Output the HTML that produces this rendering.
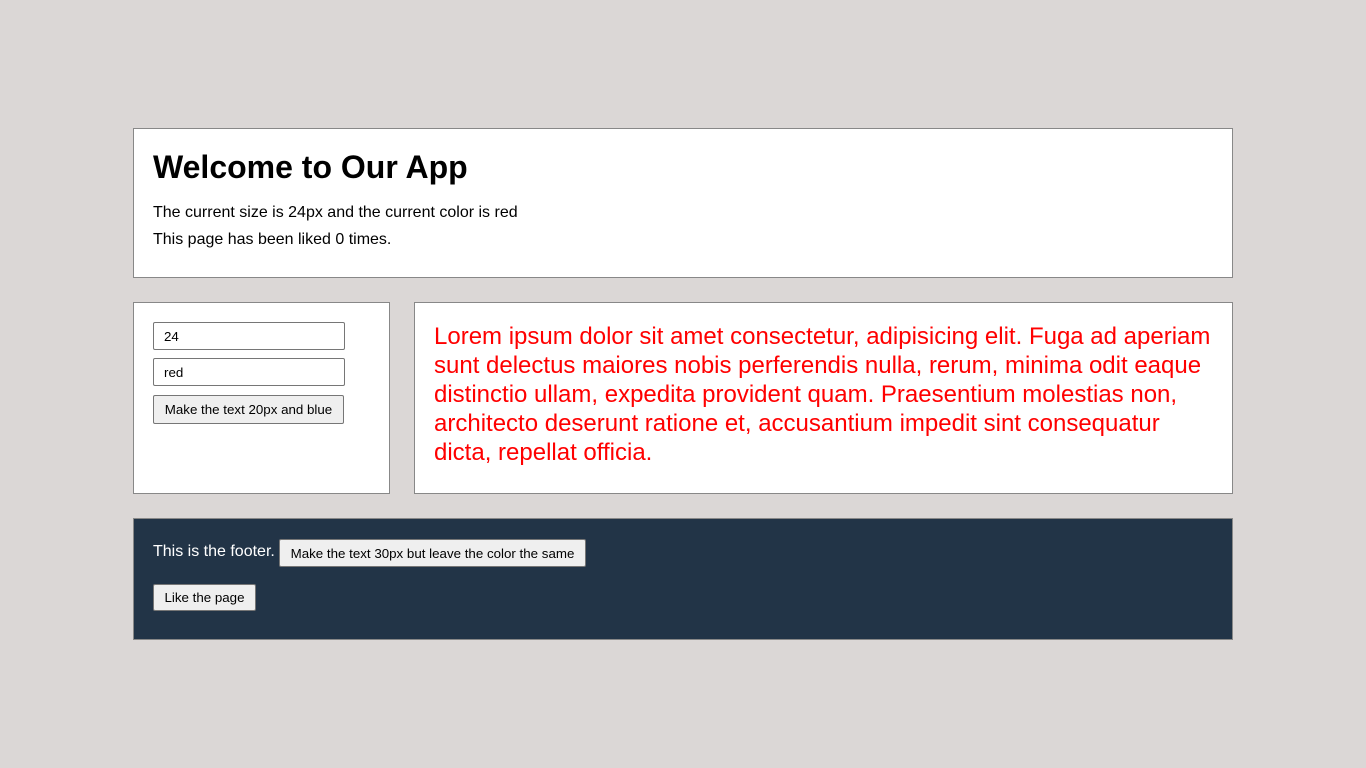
<!DOCTYPE html>
<html><head><style>
*{box-sizing:border-box}
body{margin:0;background:#dbd7d6;font-family:"Liberation Sans",Arial,sans-serif;width:1366px;height:768px;position:relative}
.box{position:absolute;border:1px solid #888;background:#fff}
h1{margin:0;position:absolute;left:19px;top:20px;font-size:32px;font-weight:bold}
.p{position:absolute;left:19px;font-size:16px}
input{position:absolute;left:19px;width:192px;height:28px;border:1px solid #767676;border-radius:2px;font:13.33px "Liberation Sans",Arial,sans-serif;padding:0 10px}
button{position:absolute;height:29px;border:1px solid #767676;border-radius:2px;background:#efefef;font:13.33px "Liberation Sans",Arial,sans-serif;padding:0 10px;white-space:nowrap}
</style></head><body>
<div class="box" style="left:133px;top:128px;width:1100px;height:150px">
<h1>Welcome to Our App</h1>
<div class="p" style="top:75px">The current size is 24px and the current color is red</div>
<div class="p" style="top:102px">This page has been liked 0 times.</div>
</div>
<div class="box" style="left:133px;top:302px;width:257px;height:192px">
<input style="top:19px" value="24">
<input style="top:55px" value="red">
<button style="left:19px;top:92px;width:191px">Make the text 20px and blue</button>
</div>
<div class="box" style="left:414px;top:302px;width:819px;height:192px">
<div style="position:absolute;left:19px;top:19px;width:779px;color:#f00;font-size:24px;line-height:29px">Lorem ipsum dolor sit amet consectetur, adipisicing elit. Fuga ad aperiam sunt delectus maiores nobis perferendis nulla, rerum, minima odit eaque distinctio ullam, expedita provident quam. Praesentium molestias non, architecto deserunt ratione et, accusantium impedit sint consequatur dicta, repellat officia.</div>
</div>
<div class="box" style="left:133px;top:518px;width:1100px;height:122px;background:#223447">
<div class="p" style="top:24px;color:#fff">This is the footer.</div>
<button style="left:145px;top:20px;height:28px;width:307px">Make the text 30px but leave the color the same</button>
<button style="left:19px;top:65px;height:27px;width:103px">Like the page</button>
</div>
</body></html>
